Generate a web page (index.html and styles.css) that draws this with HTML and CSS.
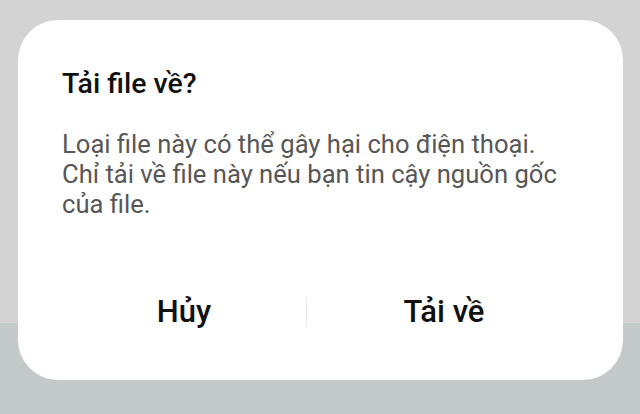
FILE: index.html
```html
<!DOCTYPE html>
<html lang="vi">
<head>
<meta charset="utf-8">
<link rel="stylesheet" href="styles.css">
</head>
<body>
<div class="screen">
  <div class="bg-top"></div>
  <div class="bg-bottom"></div>
  <div class="dialog">
    <h1 class="title">Tải file về?</h1>
    <p class="message">Loại file này có thể gây hại cho điện thoại.<br>Chỉ tải về file này nếu bạn tin cậy nguồn gốc<br>của file.</p>
    <div class="actions">
      <div class="btn btn-cancel">Hủy</div>
      <div class="divider"></div>
      <div class="btn btn-ok">Tải về</div>
    </div>
  </div>
</div>
</body>
</html>
```
FILE: styles.css
```css
html, body {
  margin: 0;
  padding: 0;
}
body {
  font-family: Roboto, "Noto Sans", sans-serif;
}
.screen {
  position: relative;
  width: 640px;
  height: 414px;
  display: flex;
  flex-direction: column;
  overflow: hidden;
}
.bg-top {
  height: 323px;
  background: #d3d3d3;
}
.bg-bottom {
  flex: 1;
  background: #c4caca;
}
.dialog {
  position: absolute;
  left: 18px;
  top: 20px;
  width: 605px;
  height: 360px;
  box-sizing: border-box;
  background: #ffffff;
  border-radius: 40px;
  padding: 49px 0 0 44px;
  display: flex;
  flex-direction: column;
}
.title {
  margin: 0;
  font-size: 28.5px;
  line-height: 30px;
  font-weight: 500;
  color: #111111;
}
.message {
  margin: 30px 0 0 0;
  font-size: 25.6px;
  line-height: 30px;
  font-weight: 400;
  color: #575757;
}
.actions {
  margin-top: 78px;
  display: grid;
  grid-template-columns: 244px 1px 274px;
  align-items: center;
}
.btn {
  text-align: center;
  font-size: 31px;
  line-height: 30px;
  font-weight: 500;
  color: #111111;
}
.divider {
  height: 28px;
  background: #e6e6e6;
}
```
